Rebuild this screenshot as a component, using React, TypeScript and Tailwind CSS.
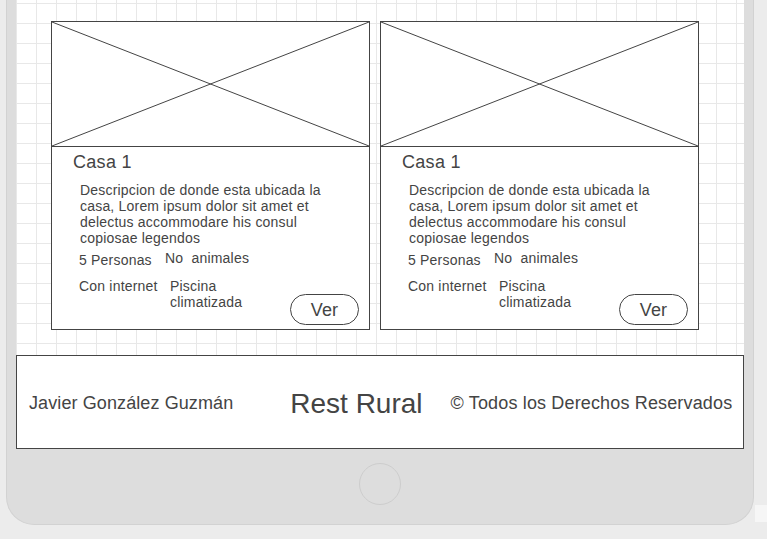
const Placeholder = () => {
  return (
    <div className="h-[125px] border-b border-[#444] relative">
      <svg
        className="absolute inset-0 w-full h-full"
        viewBox="0 0 100 100"
        preserveAspectRatio="none"
      >
        <line x1="0" y1="0" x2="100" y2="100" stroke="#444" strokeWidth="1" vectorEffect="non-scaling-stroke" />
        <line x1="0" y1="100" x2="100" y2="0" stroke="#444" strokeWidth="1" vectorEffect="non-scaling-stroke" />
      </svg>
    </div>
  );
};

const HouseCard = () => {
  return (
    <div className="w-[319px] h-[309px] border border-[#444] bg-white flex flex-col">
      <Placeholder />
      <div className="pl-[21px] pt-[4px] text-[18px] leading-[22px] tracking-[0.3px]">Casa 1</div>
      <p className="ml-[28px] mt-[9px] w-[252px] text-[14px] leading-[16px] tracking-[0.2px]">
        Descripcion de donde esta ubicada la casa, Lorem ipsum dolor sit amet et delectus accommodare his consul copiosae legendos
      </p>
      <div className="flex ml-[27px] mt-[6px] text-[14px] leading-[16px] tracking-[0.2px]">
        <span className="w-[86px]">5 Personas</span>
        <span className="-mt-[2px] whitespace-pre">No  animales</span>
      </div>
      <div className="flex items-start ml-[27px] mt-[10px] text-[14px] leading-[16px] tracking-[0.2px]">
        <span className="w-[91px]">Con internet</span>
        <span className="w-[80px]">Piscina climatizada</span>
        <button className="ml-auto mr-[10px] mt-[16px] w-[69px] h-[31px] rounded-full border border-[#444] bg-white text-[18px] leading-none text-[#444]">
          Ver
        </button>
      </div>
    </div>
  );
};

export default function App() {
  return (
    <div
      className="w-[767px] h-[539px] bg-[#ececec] relative overflow-hidden text-[#444]"
      style={{ fontFamily: '"Liberation Sans", Arial, sans-serif' }}
    >
      <div className="ml-[6px] w-[748px] h-[525px] bg-[#dddddd] border-x border-b border-[#d2d2d2] rounded-b-[28px] px-[9px] flex flex-col">
        <div className="h-[449px] bg-white bg-[linear-gradient(to_right,#e8e8e8_1px,transparent_1px),linear-gradient(to_bottom,#e8e8e8_1px,transparent_1px)] bg-[size:20px_20px] bg-[position:0px_3px] flex flex-col">
          <div className="flex gap-[10px] pl-[35px] pt-[21px]">
            <HouseCard />
            <HouseCard />
          </div>
          <footer className="mt-auto h-[94px] border border-[#444] bg-white flex items-center pl-[12px] pt-[3px]">
            <span className="text-[18px] tracking-[0.1px]">Javier González Guzmán</span>
            <span className="ml-[57px] text-[28px]">Rest Rural</span>
            <span className="ml-[28px] text-[18px] tracking-[0.15px]">© Todos los Derechos Reservados</span>
          </footer>
        </div>
        <div className="mt-[14px] mx-auto w-[42px] h-[42px] rounded-full border border-[#cdcdcd]" />
      </div>
      <div className="absolute left-[755px] top-[505px] w-[12px] h-[17px] bg-[#f6f6f6]" />
    </div>
  );
}
